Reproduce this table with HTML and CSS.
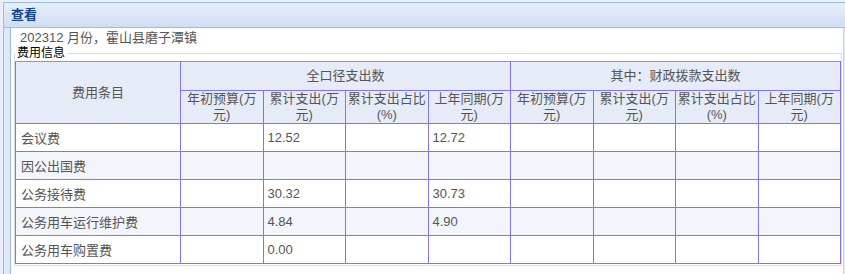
FILE: index.html
```html
<!DOCTYPE html>
<html lang="zh">
<head>
<meta charset="utf-8">
<title>查看</title>
<link rel="stylesheet" href="styles.css">
</head>
<body>
<div class="window">
  <div class="win-header">查看</div>
  <div class="win-body">
    <div class="info">202312 月份，霍山县磨子潭镇</div>
    <fieldset class="fs">
      <legend class="fs-legend">费用信息</legend>
      <table class="grid">
        <colgroup>
          <col class="c-name">
          <col class="c-num"><col class="c-num"><col class="c-num"><col class="c-num">
          <col class="c-num"><col class="c-num"><col class="c-num"><col class="c-num">
        </colgroup>
        <thead>
          <tr class="h1">
            <th rowspan="2">费用条目</th>
            <th colspan="4">全口径支出数</th>
            <th colspan="4">其中：财政拨款支出数</th>
          </tr>
          <tr class="h2">
            <th>年初预算(万<br>元)</th>
            <th>累计支出(万<br>元)</th>
            <th>累计支出占比<br>(%)</th>
            <th>上年同期(万<br>元)</th>
            <th>年初预算(万<br>元)</th>
            <th>累计支出(万<br>元)</th>
            <th>累计支出占比<br>(%)</th>
            <th>上年同期(万<br>元)</th>
          </tr>
        </thead>
        <tbody>
          <tr><td class="name">会议费</td><td></td><td>12.52</td><td></td><td>12.72</td><td></td><td></td><td></td><td></td></tr>
          <tr class="alt"><td class="name">因公出国费</td><td></td><td></td><td></td><td></td><td></td><td></td><td></td><td></td></tr>
          <tr><td class="name">公务接待费</td><td></td><td>30.32</td><td></td><td>30.73</td><td></td><td></td><td></td><td></td></tr>
          <tr class="alt"><td class="name">公务用车运行维护费</td><td></td><td>4.84</td><td></td><td>4.90</td><td></td><td></td><td></td><td></td></tr>
          <tr><td class="name">公务用车购置费</td><td></td><td>0.00</td><td></td><td></td><td></td><td></td><td></td><td></td></tr>
        </tbody>
      </table>
    </fieldset>
  </div>
</div>
</body>
</html>
```

FILE: styles.css
```css
html, body {
  margin: 0;
  padding: 0;
  height: 100%;
  overflow: hidden;
}
body {
  background: #eceef8;
  font-family: "Liberation Sans", "Noto Sans CJK SC", sans-serif;
}
.window {
  margin: 2px 0 0 3px;
  border-top: 1px solid #99bbe8;
  border-left: 1px solid #99bbe8;
  background: #dfe8f6;
  height: 272px;
  box-sizing: border-box;
  display: flex;
  flex-direction: column;
}
.win-header {
  flex: none;
  height: 24px;
  line-height: 24px;
  padding-left: 7px;
  font-size: 13px;
  font-weight: bold;
  color: #15428b;
  background: linear-gradient(#e6eef9, #d0def2);
  border-bottom: 1px solid #99bbe8;
}
.win-body {
  flex: 1;
  min-height: 0;
  overflow: hidden;
  margin-left: 6px;
  margin-right: 1px;
  background: #fff;
  border-left: 1px solid #99bbe8;
  border-right: 1px solid #d4d4d4;
  padding-top: 1px;
}
.info {
  height: 18px;
  line-height: 18px;
  padding-left: 9px;
  font-size: 13px;
  color: #555;
}
.fs {
  margin: 0 1px 0 3px;
  padding: 2px 1px 1px 0;
  border: 1px solid #dcdcdc;
  min-width: 0;
}
.fs-legend {
  padding: 0 2px;
  font-size: 12px;
  line-height: 12px;
  color: #000;
}
.grid {
  border-collapse: collapse;
  table-layout: fixed;
  width: 825px;
  font-size: 13px;
  color: #555;
}
.c-name { width: 165px; }
.c-num { width: 82.5px; }
.grid th, .grid td {
  border: 1px solid #8470ff;
  padding: 0;
  overflow: hidden;
}
.grid th {
  background: #e5ecf8;
  font-weight: normal;
  text-align: center;
  line-height: 16px;
}
.h1 th {
  border-top-color: #52ade4;
}
.h1 { height: 29px; }
.h2 { height: 32px; }
.grid tbody tr { height: 28px; }
.grid td {
  padding-left: 4px;
  white-space: nowrap;
}
.grid td.name { padding-left: 5px; }
.grid tr.alt td { background: #f2f5fb; }
```
